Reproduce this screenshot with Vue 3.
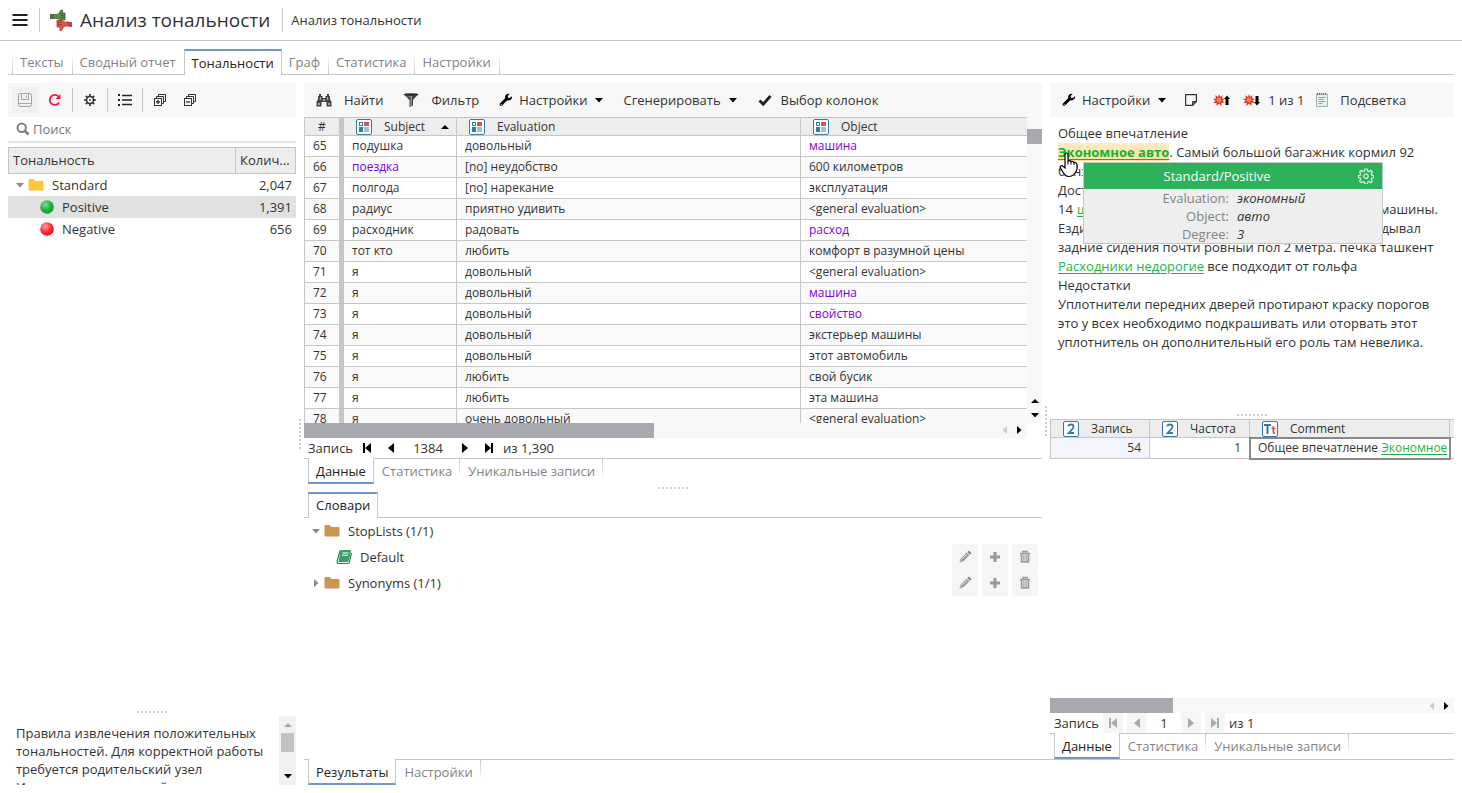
<script setup>
import { ref } from 'vue'

const search = ref('')
const record = ref('1384')
const detailRecord = ref('1')

const topTabs = ['Тексты', 'Сводный отчет', 'Тональности', 'Граф', 'Статистика', 'Настройки']
const dataTabs = ['Данные', 'Статистика', 'Уникальные записи']
const resultTabs = ['Результаты', 'Настройки']

const sentiments = [
  { name: 'Standard', count: '2,047', icon: 'folder' },
  { name: 'Positive', count: '1,391', icon: 'green', selected: true },
  { name: 'Negative', count: '656', icon: 'red' },
]

const columns = ['Subject', 'Evaluation', 'Object']
const rows = [
  { n: 65, subject: 'подушка', evaluation: 'довольный', object: 'машина', objectLink: true },
  { n: 66, subject: 'поездка', evaluation: '[no] неудобство', object: '600 километров', subjectLink: true },
  { n: 67, subject: 'полгода', evaluation: '[no] нарекание', object: 'эксплуатация' },
  { n: 68, subject: 'радиус', evaluation: 'приятно удивить', object: '<general evaluation>' },
  { n: 69, subject: 'расходник', evaluation: 'радовать', object: 'расход', objectLink: true },
  { n: 70, subject: 'тот кто', evaluation: 'любить', object: 'комфорт в разумной цены' },
  { n: 71, subject: 'я', evaluation: 'довольный', object: '<general evaluation>' },
  { n: 72, subject: 'я', evaluation: 'довольный', object: 'машина', objectLink: true },
  { n: 73, subject: 'я', evaluation: 'довольный', object: 'свойство', objectLink: true },
  { n: 74, subject: 'я', evaluation: 'довольный', object: 'экстерьер машины' },
  { n: 75, subject: 'я', evaluation: 'довольный', object: 'этот автомобиль' },
  { n: 76, subject: 'я', evaluation: 'любить', object: 'свой бусик' },
  { n: 77, subject: 'я', evaluation: 'любить', object: 'эта машина' },
  { n: 78, subject: 'я', evaluation: 'очень довольный', object: '<general evaluation>' },
]

const dictionaries = [
  { name: 'StopLists (1/1)', kind: 'open' },
  { name: 'Default', kind: 'book', actions: true },
  { name: 'Synonyms (1/1)', kind: 'closed', actions: true },
]
const actions = [
  { icon: 'pencil', label: 'Изменить' },
  { icon: 'plus', label: 'Добавить' },
  { icon: 'trash', label: 'Удалить' },
]

const facts = [
  { label: 'Evaluation:', value: 'экономный' },
  { label: 'Object:', value: 'авто' },
  { label: 'Degree:', value: '3' },
]
</script>

<template>
  <svg class="defs" aria-hidden="true">
    <defs>
      <radialGradient id="g-green" cx="0.38" cy="0.32" r="0.7">
        <stop offset="0" stop-color="#7fdc94" /><stop offset="0.6" stop-color="#1fb141" /><stop offset="1" stop-color="#139a33" />
      </radialGradient>
      <radialGradient id="g-red" cx="0.38" cy="0.32" r="0.7">
        <stop offset="0" stop-color="#ffa0a0" /><stop offset="0.6" stop-color="#ff2b35" /><stop offset="1" stop-color="#e80f1c" />
      </radialGradient>
    </defs>
    <symbol id="i-down" viewBox="0 0 8 8"><path d="M0 2h8L4 6.500z" /></symbol>
    <symbol id="i-up" viewBox="0 0 8 8"><path d="M0 6h8L4 2z" /></symbol>
    <symbol id="i-right" viewBox="0 0 8 8"><path d="M2 0v8L6.500 4z" /></symbol>
    <symbol id="i-left" viewBox="0 0 8 8"><path d="M6 0v8L1.500 4z" /></symbol>
    <symbol id="i-first" viewBox="0 0 12 12"><path d="M2 1h2v10H2zM10 1v10L4 6z" /></symbol>
    <symbol id="i-prev" viewBox="0 0 12 12"><path d="M9 1v10L3 6z" /></symbol>
    <symbol id="i-next" viewBox="0 0 12 12"><path d="M3 1v10l6-5z" /></symbol>
    <symbol id="i-last" viewBox="0 0 12 12"><path d="M8 1h2v10H8zM2 1v10l6-5z" /></symbol>
    <symbol id="i-wrench" viewBox="0 0 14 14">
      <path d="M12.900 3.200l-2 1.900-1.800-.4-.5-1.800 2-1.900C8.800.4 6.700 1.300 6.200 3.200c-.2.700-.1 1.300.1 1.900L1.200 10.200c-.8.700-.8 1.600-.2 2.200.7.700 1.600.6 2.300-.1l5-5.100c2.300.8 4.900-.8 4.800-3.400zM2.200 12.200a.6.600 0 110-1.200.6.600 0 010 1.200z" />
    </symbol>
    <symbol id="i-folder" viewBox="0 0 16 14"><path d="M0.500 2Q0.500 1 1.500 1H5.500L7.500 3H14.500Q15.500 3 15.500 4V11.500Q15.500 12.500 14.500 12.500H1.500Q.5 12.500.5 11.500z" /></symbol>
    <symbol id="i-cat" viewBox="0 0 16 16">
      <rect x="0.500" y="0.500" width="15" height="15" rx="1.500" fill="#fff" stroke="#337ba7" />
      <rect x="3.500" y="3.500" width="3" height="3" fill="#fff" stroke="#337ba7" />
      <path d="M8 3h5v4H8z" fill="#e4504b" /><path d="M3 8h4v5H3z" fill="#337ba7" /><path d="M8 8h5v5H8z" fill="#a9b9d2" />
    </symbol>
    <symbol id="i-burst" viewBox="0 0 12 12">
      <path d="M6 0l1 3 2.600-1.800L9 4.300 12 5 9.500 6.600 11.600 9 8.500 8.600 8.300 12 6 9.500 3.700 12 3.500 8.700.400 9.300 2.500 6.600 0 5l3-.600L2.300 1.300 5 3z" fill="#d8321c" />
      <path d="M6 2.500l.8 1.700L8.500 4l-.6 1.600L9 6.800l-1.600.5L6.800 9 6 7.900 4.800 9l-.3-1.800L3 6.800l1-1.200L3.600 4l1.700.2z" fill="#ff8a52" />
    </symbol>
    <symbol id="i-pencil" viewBox="0 0 14 14">
      <path d="M1.500 12.500l.9-3.600 6.300-6.300 2.700 2.700-6.300 6.300z" fill="#999" /><path d="M9.300 2l1-1q.6-.5 1.200 0L13 2.500q.5.600 0 1.200l-1 1z" fill="#888" /><path d="M3.500 9.700L9.300 3.900" stroke="#f5f5f5" stroke-width="0.800" /><path d="M2.500 10.500l1 1" stroke="#f5f5f5" />
    </symbol>
    <symbol id="i-plus" viewBox="0 0 14 14"><path d="M5.500 2h3v3.500H12v3H8.500V12h-3V8.500H2v-3h3.500z" fill="#999" /></symbol>
    <symbol id="i-trash" viewBox="0 0 14 14">
      <path d="M5 2.500v-1h4v1M2 3.500h10M3.500 4v8h7V4" fill="#ddd" stroke="#999" stroke-width="1.500" /><path d="M5.500 5v6M7 5v6M8.500 5v6" stroke="#aaa" stroke-width="0.800" />
    </symbol>
  </svg>

  <div class="app">
    <header class="head">
      <button class="menu" aria-label="Меню">
        <svg width="16" height="12" viewBox="0 0 16 12"><path d="M0.500 1h15M0.500 6h15M0.500 11h15" stroke="#222" stroke-width="2" /></svg>
      </button>
      <span class="vline"></span>
      <svg class="logo" width="22" height="22" viewBox="0 0 22 22">
        <path d="M0 5h3v5H0z" fill="#4c6f46" /><path d="M3 5.500h4L9.500 4 11 1h1.500v3H15v7H11l-1 1-2-2.500H3z" fill="#5c8a50" stroke="#3f6339" stroke-width="0.800" />
        <path d="M10 4.500h5M10 6.500h5M10 8.500h5" stroke="#35522f" stroke-width="0.600" />
        <path d="M22 13h-3v5h3z" fill="#c9443b" /><path d="M19 13h-5l-2-1.500H7V18h3v3.500h1.500L13 18.500l2-1.500h4z" fill="#e4534a" stroke="#a5352f" stroke-width="0.800" />
        <path d="M7 13.500h5M7 15.500h5" stroke="#8f2f2a" stroke-width="0.600" />
      </svg>
      <h1>Анализ тональности</h1>
      <span class="vline"></span>
      <span class="crumb">Анализ тональности</span>
    </header>

    <nav class="tabs top main-tabs" role="tablist">
      <button v-for="(t, i) in topTabs" :key="t" role="tab" :aria-selected="i === 2" :class="{ active: i === 2, first: i === 0, before: i === 1 }">{{ t }}</button>
    </nav>

    <main class="body">
      <aside class="left">
        <div class="stack grow">
          <div class="toolbar">
            <button class="sq shaded" aria-label="Сохранить" disabled>
              <svg width="14" height="14" viewBox="0 0 14 14" fill="none" stroke="#a5a5a5"><rect x="0.500" y="0.500" width="13" height="13" rx="2" /><path d="M3.500 1v5.500h7V1M8.500 2.500v2M1 10.500h12" /></svg>
            </button>
            <button class="sq" aria-label="Обновить">
              <svg width="14" height="14" viewBox="0 0 14 14"><path d="M11.200 9.300A5 5 0 1110.500 3.600" fill="none" stroke="#ee1c35" stroke-width="1.800" /><path d="M12.500 1v5h-5z" fill="#ee1c35" /></svg>
            </button>
            <span class="vline"></span>
            <button class="sq" aria-label="Параметры">
              <svg width="12" height="12" viewBox="0 0 12 12" fill="none"><circle cx="6" cy="6" r="3.500" stroke="#333" stroke-width="1.600" /><circle cx="6" cy="6" r="0.900" fill="#333" /><path d="M6 0v2.500M6 9.500V12M0 6h2.500M9.500 6H12M1.800 1.800l1.700 1.700M8.500 8.500l1.700 1.700M1.800 10.200l1.700-1.700M8.500 3.500l1.700-1.700" stroke="#333" stroke-width="1.700" /></svg>
            </button>
            <span class="vline"></span>
            <button class="sq" aria-label="Список">
              <svg width="14" height="12" viewBox="0 0 14 12"><path d="M0 1h2M0 6h2M0 11h2" stroke="#222" stroke-width="2" /><path d="M4 1.500h10M4 6h10M4 10.500h10" stroke="#222" stroke-width="1.300" /></svg>
            </button>
            <span class="vline"></span>
            <button v-for="k in ['Развернуть', 'Свернуть']" :key="k" class="sq" :aria-label="k">
              <svg width="12" height="12" viewBox="0 0 12 12" fill="none" stroke="#333"><path d="M4.500 2.500v-2h7v7h-2M2.500 4.500v-2h7v7h-2" /><rect x="0.500" y="4.500" width="7" height="7" /><path d="M2 8h4" stroke-width="1.400" /><path v-if="k === 'Развернуть'" d="M4 6v4" stroke-width="1.400" /></svg>
            </button>
          </div>
          <label class="search">
            <svg width="14" height="14" viewBox="0 0 14 14" fill="none" stroke="#7d7d7d"><circle cx="5.700" cy="5.700" r="4.200" stroke-width="2" /><path d="M9 9l3.500 3.500" stroke-width="2.600" /></svg>
            <input v-model="search" type="text" placeholder="Поиск" aria-label="Поиск" />
          </label>
          <table class="tree">
            <colgroup><col /><col class="count" /></colgroup>
            <thead><tr><th>Тональность</th><th>Колич...</th></tr></thead>
            <tbody>
              <tr v-for="s in sentiments" :key="s.name" :class="{ selected: s.selected }">
                <td>
                  <div class="node" :class="{ child: s.icon !== 'folder' }">
                    <template v-if="s.icon === 'folder'">
                      <svg class="caret" width="8" height="8"><use href="#i-down" /></svg>
                      <svg class="yellow" width="16" height="14"><use href="#i-folder" /></svg>
                    </template>
                    <svg v-else width="14" height="14" viewBox="0 0 14 14"><circle cx="7" cy="7" r="6.800" :fill="`url(#g-${s.icon})`" /></svg>
                    <span>{{ s.name }}</span>
                  </div>
                </td>
                <td>{{ s.count }}</td>
              </tr>
            </tbody>
          </table>
        </div>
        <div class="split-h"><i></i></div>
        <div class="hint">
          <p>Правила извлечения положительных тональностей. Для корректной работы требуется родительский узел Используется корневой</p>
          <div class="hint-scroll">
            <svg class="dim" width="8" height="8"><use href="#i-up" /></svg>
            <i></i>
            <svg width="8" height="8"><use href="#i-down" /></svg>
          </div>
        </div>
      </aside>

      <div class="split-v"><i></i></div>

      <section class="results">
        <div class="panes">
          <div class="middle">
            <div class="stack mid-top">
              <div class="toolbar">
                <button class="wide">
                  <svg width="16" height="14" viewBox="0 0 16 14" fill="#444"><path d="M3 1h2v2h1.500v2h3V3H11V1h2v2h1v3l1.500 3v4.500h-5V9h-5v4.500h-5V9L2 6V3h1z" /><path d="M2 10h2v2H2zM12 10h2v2h-2zM7 6h2v2H7zM4 4h1v3H3.500zM11 4h1l.5 3H11z" fill="#aaa" /></svg>
                  Найти
                </button>
                <button class="wide">
                  <svg width="16" height="14" viewBox="0 0 16 14"><path d="M1 1.500h14L10 7v5.500L6.500 14V7z" fill="#444" /><path d="M4 3h4.500L8 7v5.500" fill="none" stroke="#aaa" stroke-width="1.200" /><ellipse cx="8" cy="1.600" rx="7.500" ry="1.400" fill="#2c2c2c" /></svg>
                  Фильтр
                </button>
                <button>
                  <svg width="14" height="14"><use href="#i-wrench" /></svg>Настройки
                  <svg class="drop" width="8" height="8"><use href="#i-down" /></svg>
                </button>
                <button>Сгенерировать <svg class="drop" width="8" height="8"><use href="#i-down" /></svg></button>
                <button class="check">
                  <svg width="16" height="14" viewBox="0 0 16 14"><path d="M2.500 7.500l3.700 3.700L13.500 3" fill="none" stroke="#222" stroke-width="2.900" /></svg>
                  Выбор колонок
                </button>
              </div>
              <div class="grid-box">
                <div class="clip">
                  <table class="grid">
                    <colgroup><col class="c-num" /><col class="c-subject" /><col class="c-eval" /><col /></colgroup>
                    <thead>
                      <tr>
                        <th>#</th>
                        <th v-for="c in columns" :key="c">
                          <div class="th"><svg width="16" height="16"><use href="#i-cat" /></svg>{{ c }}<svg v-if="c === 'Subject'" class="sort" width="8" height="8"><use href="#i-up" /></svg></div>
                        </th>
                      </tr>
                    </thead>
                    <tbody>
                      <tr v-for="r in rows" :key="r.n">
                        <td>{{ r.n }}</td>
                        <td><a v-if="r.subjectLink" href="#">{{ r.subject }}</a><template v-else>{{ r.subject }}</template></td>
                        <td>{{ r.evaluation }}</td>
                        <td><a v-if="r.objectLink" href="#">{{ r.object }}</a><template v-else>{{ r.object }}</template></td>
                      </tr>
                    </tbody>
                  </table>
                </div>
                <div class="vbar"><i></i><span></span><svg width="8" height="8"><use href="#i-up" /></svg><svg width="8" height="8"><use href="#i-down" /></svg></div>
                <div class="hbar"><i></i><span></span><svg class="faint" width="8" height="8"><use href="#i-left" /></svg><svg width="8" height="8"><use href="#i-right" /></svg></div>
              </div>
              <div class="pager">
                <label for="record">Запись</label>
                <button aria-label="Первая"><svg width="12" height="12"><use href="#i-first" /></svg></button>
                <button aria-label="Предыдущая"><svg width="12" height="12"><use href="#i-prev" /></svg></button>
                <input id="record" v-model="record" type="text" />
                <button aria-label="Следующая"><svg width="12" height="12"><use href="#i-next" /></svg></button>
                <button aria-label="Последняя"><svg width="12" height="12"><use href="#i-last" /></svg></button>
                <span>из 1,390</span>
              </div>
              <div class="tabs bottom" role="tablist">
                <button v-for="(t, i) in dataTabs" :key="t" role="tab" :aria-selected="i === 0" :class="{ active: i === 0 }">{{ t }}</button>
              </div>
            </div>
            <div class="split-h"><i></i></div>
            <div class="stack mid-bottom">
              <div class="tabs top" role="tablist"><button class="active" role="tab" aria-selected="true">Словари</button></div>
              <ul class="dicts">
                <li v-for="d in dictionaries" :key="d.name">
                  <div class="node" :class="{ sub: d.kind === 'book' }">
                    <svg v-if="d.kind === 'book'" width="16" height="16" viewBox="0 0 16 16"><path d="M4.500 1H14q1.300 0 1 1.200L12.600 12q-.3 1-1.400 1H2.500z" fill="#3f9c68" /><path d="M6.500 4h6M6 6.200h6" stroke="#fff" stroke-width="1.100" /><path d="M4 1.500L1.200 12q-.4 2.500 1.300 2.500H12q1 0 1.300-1L15.500 4" fill="none" stroke="#2f8355" stroke-width="1.200" /></svg>
                    <template v-else>
                      <svg class="caret" width="8" height="8"><use :href="d.kind === 'open' ? '#i-down' : '#i-right'" /></svg>
                      <svg class="tan" width="16" height="14"><use href="#i-folder" /></svg>
                    </template>
                    <span>{{ d.name }}</span>
                  </div>
                  <div v-if="d.actions" class="acts">
                    <button v-for="a in actions" :key="a.icon" :aria-label="a.label"><svg width="14" height="14"><use :href="`#i-${a.icon}`" /></svg></button>
                  </div>
                </li>
              </ul>
            </div>
          </div>

          <div class="split-v"><i></i></div>

          <div class="right">
            <div class="stack right-top">
              <div class="toolbar">
                <button>
                  <svg width="14" height="14"><use href="#i-wrench" /></svg>Настройки
                  <svg class="drop" width="8" height="8"><use href="#i-down" /></svg>
                </button>
                <button class="sq" aria-label="Заметка">
                  <svg width="12" height="12" viewBox="0 0 12 12" fill="none" stroke="#333"><path d="M0.600.6h10.800v7L7.600 11.400h-7z" stroke-width="1.200" /><path d="M11.400 7.600H7.600v3.800z" fill="#777" /></svg>
                </button>
                <button class="sq" aria-label="Предыдущее">
                  <svg width="17" height="12" viewBox="0 0 17 12"><svg width="12" height="12"><use href="#i-burst" /></svg><path d="M14 1.500l3 3.500h-1.500v6h-3V5H11z" fill="#000" /></svg>
                </button>
                <button class="sq" aria-label="Следующее">
                  <svg width="17" height="12" viewBox="0 0 17 12"><svg width="12" height="12"><use href="#i-burst" /></svg><path d="M14 11.500l3-3.500h-1.500V2h-3v6H11z" fill="#000" /></svg>
                </button>
                <span>1 из 1</span>
                <button class="wide">
                  <svg width="12" height="14" viewBox="1 0 12 14"><path d="M1.500 1h11v12.500h-11z" fill="#e4efec" stroke="#9fb5b1" /><path d="M2 1h10" stroke="#555" stroke-width="1.500" stroke-dasharray="1 1" /><path d="M3.500 4.500h7M3.500 6.500h5M3.500 8.500h7M3.500 10.500h4" stroke="#8ba9a6" /></svg>
                  Подсветка
                </button>
              </div>
              <article class="doc">
                <p>Общее впечатление</p>
                <p><a class="hit" href="#">Экономное авто</a>. Самый большой багажник кормил 92</p>
                <p>бензин что в городе</p>
                <p>Достоинства</p>
                <p class="ends">14 <a href="#">шикарный салон</a><span>хорошей машины.</span></p>
                <p class="ends short">Ездил на море<span>складывал</span></p>
                <p>задние сидения почти ровный пол 2 метра. печка ташкент</p>
                <p><a href="#">Расходники недорогие</a> все подходит от гольфа</p>
                <p>Недостатки</p>
                <p>Уплотнители передних дверей протирают краску порогов</p>
                <p>это у всех необходимо подкрашивать или оторвать этот</p>
                <p>уплотнитель он дополнительный его роль там невелика.</p>
                <div class="popup">
                  <div class="popup-head">
                    <span>Standard/Positive</span>
                    <button aria-label="Настройки правила">
                      <svg width="16" height="16" viewBox="0 0 16 16" fill="none" stroke="#d9f4e1" stroke-width="1.200"><path d="M6.800 1h2.400l.4 2 1.400.6 1.700-1.200 1.700 1.700-1.200 1.700.6 1.400 2 .4v2l-2 .4-.6 1.400 1.200 1.700-1.700 1.700-1.700-1.200-1.400.6-.4 2H6.800l-.4-2-1.400-.6-1.700 1.200-1.700-1.700L2.800 11.400l-.6-1.400-2-.4v-2l2-.4.6-1.400L1.600 4.100l1.700-1.700L5 3.600 6.400 3z" /><circle cx="8" cy="8.200" r="2.200" /></svg>
                    </button>
                  </div>
                  <dl>
                    <template v-for="f in facts" :key="f.label"><dt>{{ f.label }}</dt><dd>{{ f.value }}</dd></template>
                  </dl>
                </div>
                <svg class="cursor" width="20" height="26" viewBox="0 0 20 26"><path d="M6 3Q6 1 7.500 1T9 3V9Q10.500 8 12 9.500 13.500 8.800 15 10.500 17.500 10 18 12.500 18.800 17 16.500 20.500 14 24.500 9.500 24.500 6.500 24.500 4.500 21L1.500 16Q1 13.500 3 13.500L6 16z" fill="#fff" stroke="#000" stroke-width="1.200" /><path d="M9 9v3.500M12 9.500V12.500M15 10.500V13" stroke="#000" /></svg>
              </article>
            </div>
            <div class="split-h"><i></i></div>
            <div class="stack right-bottom">
              <div class="clip grow">
                <table class="grid detail">
                  <colgroup><col class="c-record" /><col class="c-freq" /><col class="c-comment" /><col /></colgroup>
                  <thead>
                    <tr>
                      <th v-for="c in ['Запись', 'Частота']" :key="c">
                        <div class="th"><svg width="16" height="16" viewBox="0 0 16 16"><rect x="0.500" y="0.500" width="15" height="15" rx="1.500" fill="#fff" stroke="#337ba7" /><path d="M5.300 5.300Q5.500 3.500 8 3.500t2.500 2Q10.500 7.300 5.800 12H11" fill="none" stroke="#337ba7" stroke-width="1.800" /></svg>{{ c }}</div>
                      </th>
                      <th>
                        <div class="th"><svg width="16" height="16" viewBox="0 0 16 16"><rect x="0.500" y="0.500" width="15" height="15" rx="1.500" fill="#fff" stroke="#337ba7" /><path d="M2 4h7M5.500 4v9" stroke="#337ba7" stroke-width="2" /><path d="M11.300 5v6q0 1.500 2 1M9.500 7.500h4" fill="none" stroke="#e4504b" stroke-width="1.600" /></svg>Comment</div>
                      </th>
                      <th></th>
                    </tr>
                  </thead>
                  <tbody>
                    <tr>
                      <td class="num tinted">54</td>
                      <td class="num">1</td>
                      <td class="picked"><div>Общее впечатление <a class="green" href="#">Экономное</a></div></td>
                      <td></td>
                    </tr>
                  </tbody>
                </table>
              </div>
              <div class="hbar narrow"><i></i><span></span><svg class="faint" width="8" height="8"><use href="#i-left" /></svg><svg width="8" height="8"><use href="#i-right" /></svg></div>
              <div class="pager muted">
                <label for="detail-record">Запись</label>
                <button aria-label="Первая"><svg width="12" height="12"><use href="#i-first" /></svg></button>
                <button aria-label="Предыдущая"><svg width="12" height="12"><use href="#i-prev" /></svg></button>
                <input id="detail-record" v-model="detailRecord" type="text" />
                <button aria-label="Следующая"><svg width="12" height="12"><use href="#i-next" /></svg></button>
                <button aria-label="Последняя"><svg width="12" height="12"><use href="#i-last" /></svg></button>
                <span>из 1</span>
              </div>
              <div class="tabs bottom" role="tablist">
                <button v-for="(t, i) in dataTabs" :key="t" role="tab" :aria-selected="i === 0" :class="{ active: i === 0 }">{{ t }}</button>
              </div>
            </div>
          </div>
        </div>
        <div class="tabs bottom" role="tablist">
          <button v-for="(t, i) in resultTabs" :key="t" role="tab" :aria-selected="i === 0" :class="{ active: i === 0 }">{{ t }}</button>
        </div>
      </section>
    </main>
  </div>
</template>

<style>
body { margin: 0; background: #fff; }
</style>

<style scoped>
* { box-sizing: border-box; }
.defs { position: absolute; width: 0; height: 0; }
.app {
  height: 100vh;
  display: flex;
  flex-direction: column;
  padding-bottom: 8px;
  overflow: hidden;
  font: 13px/18px "Open Sans", "Noto Sans", sans-serif;
  color: #333;
  background: #fff;
}
button, input { font: inherit; color: inherit; background: none; border: 0; padding: 0; margin: 0; }
svg { display: block; flex: none; }
p, h1, ul, dl, dd { margin: 0; padding: 0; }
.vline { width: 1px; height: 24px; background: #c6c6c6; flex: none; }

.head { height: 41px; flex: none; display: flex; align-items: center; gap: 8px; padding: 0 12px; border-bottom: 1px solid #c6c6c6; }
.menu { width: 19px; }
.logo { margin-left: 2px; }
.head h1 { font-size: 19px; line-height: 24px; font-weight: 400; white-space: nowrap; margin-right: 4px; }

.tabs { display: flex; flex: none; height: 26px; padding-left: 4px; }
.tabs button { color: #838383; line-height: 18px; height: 25px; border: solid; border-width: 0 1px 0 0; white-space: nowrap; }
.tabs.top { border-bottom: 1px solid #c6c6c6; }
.tabs.top button { padding: 0 8px 0 7px; border-image: linear-gradient(#fff 20%, #c6c6c6) 1; }
.tabs.top button.first { border-left-width: 1px; }
.tabs.top button.before { border-right-width: 0; }
.tabs.bottom { border-top: 1px solid #c6c6c6; }
.tabs.bottom button { padding: 0 7px 1px 8px; border-image: linear-gradient(#c6c6c6, #fff 80%) 1; }
.tabs button.active { color: #222; background: #fff; height: 26px; border-image: none; border: solid #c6c6c6; }
.tabs.top button.active { padding: 0 7px 1px; border-width: 2px 1px 0; border-top-color: #6e98c6; border-image: none; }
.tabs.bottom button.active { padding: 2px 7px 0; border-width: 0 1px 2px; border-bottom-color: #6e98c6; border-image: none; margin-top: -1px; }
.main-tabs { margin: 8px; }

.body { flex: 1; min-height: 0; display: flex; padding: 0 8px; }
.left { flex: 0 0 288px; display: flex; flex-direction: column; min-height: 0; }
.results { flex: 1; min-width: 0; display: flex; flex-direction: column; }
.panes { flex: 1; min-height: 0; display: flex; }
.middle { flex: 1; min-width: 0; display: flex; flex-direction: column; }
.right { flex: 0 0 404px; display: flex; flex-direction: column; min-height: 0; }
.stack { display: flex; flex-direction: column; min-height: 0; }
.grow { flex: 1; }
.mid-top { flex: 3 1 0; }
.mid-bottom { flex: 2 1 0; }
.right-top { flex: 82 1 0; }
.right-bottom { flex: 85 1 0; }
.split-h, .split-v { flex: 0 0 8px; display: flex; align-items: center; justify-content: center; }
.split-h i { width: 30px; height: 2px; background: repeating-linear-gradient(90deg, #ccc 0 2px, transparent 2px 4px); }
.split-v i { height: 30px; width: 2px; background: repeating-linear-gradient(#ccc 0 2px, transparent 2px 4px); }

.toolbar { flex: none; height: 34px; display: flex; align-items: center; gap: 4px; padding: 0 4px; background: #f7f7f7; white-space: nowrap; }
.toolbar button { display: flex; align-items: center; gap: 6px; height: 26px; padding: 0 8px; }
.toolbar .wide { gap: 12px; }
.toolbar .check { gap: 8px; }
.toolbar .drop { margin-left: 2px; }
.toolbar .sq { width: 26px; padding: 0; justify-content: center; }
.toolbar .shaded { background: #f0f0f0; border-radius: 2px; }

.search { flex: none; height: 26px; display: flex; align-items: center; gap: 3px; padding: 0 8px; border-bottom: 2px solid #dfe3ea; margin-bottom: 4px; }
.search input { flex: 1; min-width: 0; outline: none; }
.search input::placeholder { color: #777; opacity: 1; }

.tree { width: 100%; table-layout: fixed; border-collapse: separate; border-spacing: 0; }
.tree .count { width: 60px; }
.tree th { height: 27px; padding: 0 4px 1px; text-align: left; font-weight: 400; background: #ededed; border: 1px solid #c6c6c6; white-space: nowrap; }
.tree th + th { border-left: 0; }
.tree td { height: 22px; padding: 0 4px 0 8px; }
.tree td + td { text-align: right; }
.tree .selected td { background: #e1e1e1; }
.node { display: flex; align-items: center; gap: 4px; white-space: nowrap; }
.node span { margin-left: 4px; }
.tree .node.child { padding-left: 24px; }
.caret { fill: #8a8a8a; }
.yellow { fill: #ffc53a; }
.tan { fill: #cb9654; }

.hint { flex: 0 0 69px; display: flex; overflow: hidden; }
.hint p { flex: 1; min-width: 0; padding: 8px 8px 0; }
.hint-scroll { flex: 0 0 17px; display: flex; flex-direction: column; align-items: center; padding: 5px 0; background: #f1f1f1; }
.hint-scroll i { width: 13px; height: 19px; margin: 4px 0 auto; background: #c1c1c1; }
.dim { fill: #a3a3a3; }

.grid-box { flex: 1; min-height: 0; display: grid; grid-template: minmax(0, 1fr) 15px / minmax(0, 1fr) 15px; }
.clip { overflow: hidden; min-height: 0; }
.grid { width: 100%; table-layout: fixed; border-collapse: separate; border-spacing: 0; border-left: 1px solid #c6c6c6; font-size: 12px; line-height: 16px; }
.c-num { width: 39px; }
.c-subject { width: 113px; }
.c-eval { width: 344px; }
.c-record { width: 99px; }
.c-freq { width: 100px; }
.c-comment { width: 200px; }
.grid th { height: 19px; padding: 0; font-weight: 400; background: #ededed; border: solid #c6c6c6; border-width: 1px 1px 1px 0; }
.grid td { height: 21px; padding: 0 8px; white-space: nowrap; overflow: hidden; border: solid #c6c6c6; border-width: 0 1px 1px 0; }
.grid tr > :last-child { border-right: 0; }
.grid:not(.detail) tr > :first-child { border-right-width: 5px; }
.grid tbody tr:nth-child(even) td { background: #f9f9f9; }
.grid a { color: #7d00dc; text-decoration: none; }
.th { display: flex; align-items: center; gap: 12px; height: 17px; padding: 0 7px 0 12px; }
.th .sort { margin-left: auto; }
.detail .num { text-align: right; }
.detail .tinted { background: #f4f4fe; }
.detail .picked { padding: 0 2px 0 8px; outline: 2px solid #888; outline-offset: -1px; }
.picked div { overflow: hidden; }
.grid a.green { color: #1fb544; text-decoration: underline; text-underline-offset: 2px; }

.vbar { display: flex; flex-direction: column; align-items: center; gap: 6px; background: #f7f7f7; padding: 12px 0 4px; }
.vbar i { width: 15px; height: 15px; background: #a8a9ae; flex: none; }
.vbar span, .hbar span { flex: 1; }
.hbar { flex: none; height: 15px; display: flex; align-items: center; gap: 6px; background: #f7f7f7; padding-right: 4px; }
.hbar i { width: 350px; height: 15px; background: #a8a9ae; }
.hbar.narrow i { width: 123px; }
.faint { fill: #ccc; }

.pager { flex: none; height: 20px; display: flex; align-items: center; gap: 4px; padding: 0 4px; }
.pager button { width: 20px; height: 20px; display: flex; align-items: center; justify-content: center; }
.pager input { width: 46px; height: 20px; text-align: center; }
.pager.muted input { width: 26px; }
.pager.muted button { background: #f5f5f5; }
.pager.muted svg { fill: #aaa; }

.dicts { list-style: none; }
.dicts li { height: 26px; display: flex; align-items: center; justify-content: space-between; padding: 0 4px 0 8px; }
.dicts .sub { padding-left: 24px; }
.acts { display: flex; gap: 4px; }
.acts button { width: 26px; height: 26px; display: flex; align-items: center; justify-content: center; background: #f5f5f5; border-radius: 2px; }

.doc { position: relative; flex: 1; min-height: 0; padding: 7px 8px 0; line-height: 19px; white-space: nowrap; }
.doc a { color: #1fb544; text-underline-offset: 2px; }
.doc .hit { color: #0cb52e; font-weight: 700; background: linear-gradient(#fdeccb, #fddf9f); }
.doc .ends { display: flex; gap: 4px; width: 380px; }
.doc .ends.short { width: 363px; }
.doc .ends span { margin-left: auto; }
.popup { position: absolute; left: 33px; top: 45px; width: 300px; height: 82px; background: #eee; border: 1px solid #c6c6c6; overflow: hidden; }
.popup-head { height: 26px; display: flex; align-items: center; padding-right: 8px; background: #2eb15b; color: #fff; }
.popup-head span { flex: 1; padding-right: 8px; text-align: center; }
.popup dl { display: grid; grid-template-columns: 145px 1fr; column-gap: 8px; line-height: 18px; }
.popup dt { text-align: right; color: #838383; }
.popup dd { font-style: italic; }
.cursor { position: absolute; left: 9px; top: 35px; }
</style>
